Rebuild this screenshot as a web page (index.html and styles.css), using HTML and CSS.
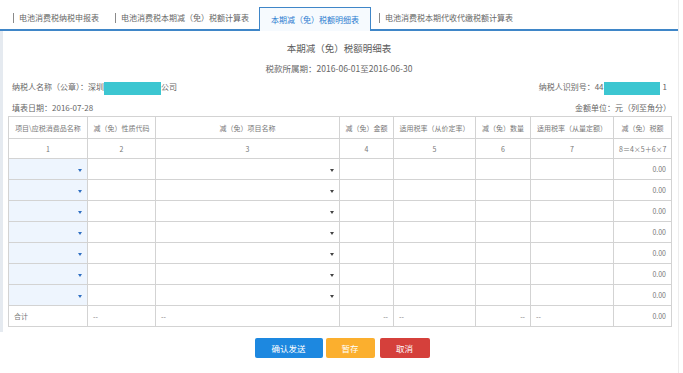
FILE: index.html
```html
<!DOCTYPE html>
<html lang="zh-CN">
<head>
  <meta charset="UTF-8" />
  <title>本期减（免）税额明细表</title>
  <link rel="stylesheet" href="styles.css">
</head>
<body>
  <div class="page">
    <div class="tabs">
      <div class="tab tab-first">电池消费税纳税申报表</div>
      <div class="tab tab-second">电池消费税本期减（免）税额计算表</div>
      <div class="tab active">本期减（免）税额明细表</div>
      <div class="tab tab-last">电池消费税本期代收代缴税额计算表</div>
    </div>

    <div class="content">
      <div class="title">本期减（免）税额明细表</div>
      <div class="period">税款所属期：2016-06-01至2016-06-30</div>
      <div class="info-row">
        <span>纳税人名称（公章）：深圳<span class="mask mask-name"></span>公司</span>
        <span>纳税人识别号：44<span class="mask mask-id"></span>1</span>
      </div>
      <div class="info-row info-row-2">
        <span>填表日期：2016-07-28</span>
        <span>金额单位：元（列至角分）</span>
      </div>

      <table class="grid">
        <colgroup>
          <col style="width:79px"><col style="width:68px"><col style="width:184px"><col style="width:54px">
          <col style="width:82px"><col style="width:55px"><col style="width:83px"><col style="width:58px">
        </colgroup>
        <thead>
          <tr class="head-row">
            <th>项目\应税消费品名称</th>
            <th>减（免）性质代码</th>
            <th>减（免）项目名称</th>
            <th>减（免）金额</th>
            <th>适用税率（从价定率）</th>
            <th>减（免）数量</th>
            <th>适用税率（从量定额）</th>
            <th>减（免）税额</th>
          </tr>
          <tr class="num-row">
            <th>1</th><th>2</th><th>3</th><th>4</th><th>5</th><th>6</th><th>7</th><th>8＝4×5＋6×7</th>
          </tr>
        </thead>
        <tbody id="rows"></tbody>
        <tfoot>
          <tr class="total-row">
            <td class="left">合计</td>
            <td class="left">--</td>
            <td class="left">--</td>
            <td class="right">--</td>
            <td class="left">--</td>
            <td class="right">--</td>
            <td class="left">--</td>
            <td class="right">0.00</td>
          </tr>
        </tfoot>
      </table>
    </div>

    <div class="actions">
      <button class="btn btn-send">确认发送</button>
      <button class="btn btn-save">暂存</button>
      <button class="btn btn-cancel">取消</button>
    </div>
  </div>

  <script>
    const body = document.getElementById('rows');
    for (let i = 0; i < 7; i++) {
      const tr = document.createElement('tr');
      tr.className = 'data-row';
      tr.innerHTML = `
        <td class="pick"><span class="caret caret-blue"></span></td>
        <td></td>
        <td class="select"><span class="caret"></span></td>
        <td></td><td></td><td></td><td></td>
        <td class="right">0.00</td>`;
      body.appendChild(tr);
    }
  </script>
</body>
</html>
```

FILE: styles.css
```css
body {
  margin: 0;
  background: #fff;
  font-family: "Noto Sans CJK SC", "Noto Sans", sans-serif;
  color: #666;
}

.page {
  width: 679px;
  min-height: 373px;
  border-right: 1px solid #ececec;
  box-sizing: border-box;
}

/* tabs */
.tabs {
  display: flex;
  align-items: flex-end;
  height: 29px;
  border-bottom: 2px solid #3f86c8;
  padding-left: 13px;
  font-size: 8px;
  color: #666;
}

.tab {
  display: flex;
  align-items: center;
  height: 23px;
  white-space: nowrap;
}

.tab::before {
  content: "";
  display: inline-block;
  width: 1px;
  height: 10px;
  background: #8a8a8a;
  margin-right: 5px;
}

.tab-first { margin-right: 16px; }
.tab-second { margin-right: 10px; }
.tab-last { margin-left: 8px; }

.tab.active {
  width: 112px;
  box-sizing: border-box;
  justify-content: center;
  border: 1px solid #3f86c8;
  border-bottom: none;
  background: #f6fafe;
  color: #2b7bd0;
  height: 24px;
  margin-bottom: -2px;
}

.tab.active::before { display: none; }

/* content */
.content {
  border-left: 3px solid #e5eaf0;
  padding: 7px 0 5px 5px;
}

.title {
  height: 20px;
  line-height: 20px;
  text-align: center;
  font-size: 9.5px;
  color: #5c5c5c;
  padding-right: 8px;
}

.period {
  height: 20px;
  line-height: 20px;
  text-align: center;
  font-size: 8.5px;
  padding-right: 8px;
}

.info-row {
  display: flex;
  justify-content: space-between;
  align-items: center;
  height: 20px;
  font-size: 8px;
  padding: 0 11px 0 4px;
}

.info-row-2 {
  height: 18px;
  padding-right: 7px;
}

.mask {
  display: inline-block;
  height: 13px;
  vertical-align: middle;
  background: #3cc6d1;
}

.mask-name { width: 57px; }
.mask-id { width: 56px; margin-right: 3px; }

/* table */
.grid {
  border-collapse: collapse;
  table-layout: fixed;
  width: 663px;
  font-size: 7px;
  color: #777;
}

.grid th,
.grid td {
  border: 1px solid #d3d3d3;
  padding: 0 5px;
  font-weight: normal;
  white-space: nowrap;
  overflow: hidden;
}

.head-row th { height: 21px; }
.num-row th { height: 19px; }
.data-row td,
.total-row td { height: 20px; }

.left { text-align: left; padding-left: 7px; }
.right { text-align: right; padding-right: 6px; }

.pick {
  background: #eef5fe;
  text-align: right;
}

.select { text-align: right; padding-right: 11px; }

.caret {
  display: inline-block;
  width: 0;
  height: 0;
  border-left: 2px solid transparent;
  border-right: 2px solid transparent;
  border-top: 3px solid #444;
  vertical-align: middle;
}

.caret-blue { border-top-color: #2f6fc2; }

/* buttons */
.actions {
  display: flex;
  justify-content: center;
  padding: 6px 0 0 6px;
}

.btn {
  height: 20px;
  border: none;
  border-radius: 2px;
  color: #fff;
  font-family: inherit;
  font-size: 8.5px;
  padding: 0;
  cursor: pointer;
}

.btn-send { width: 68px; background: #1d88e0; margin-right: 3px; }
.btn-save { width: 49px; background: #fbaf2e; margin-right: 5px; }
.btn-cancel { width: 50px; background: #d5403b; }
```
